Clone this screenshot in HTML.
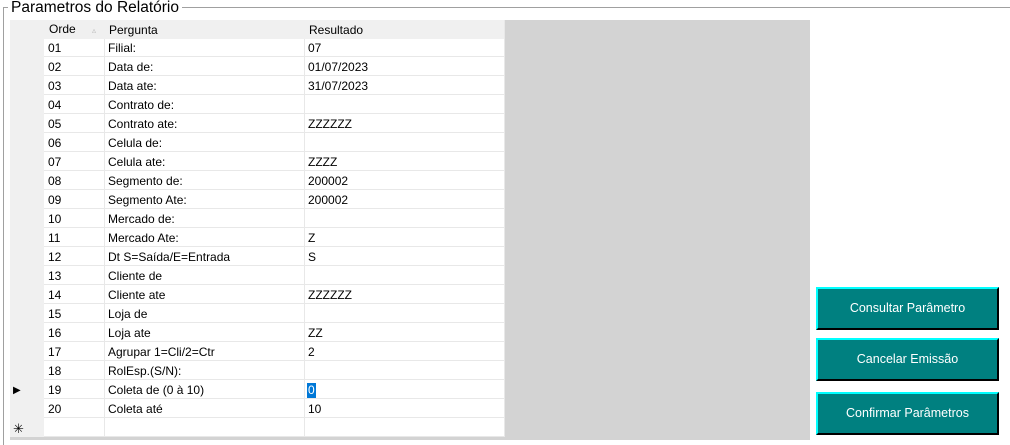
<!DOCTYPE html>
<html><head><style>
body{margin:0;width:1010px;height:445px;background:#fff;position:relative;overflow:hidden;font-family:"Liberation Sans",Arial,sans-serif;font-size:12px;color:#000}
.a{position:absolute}
.t{position:absolute;white-space:nowrap;line-height:19px}
.btn{position:absolute;left:816px;width:183px;height:43px;background:#008080;box-sizing:border-box;border-top:2px solid #00ffff;border-left:2px solid #00ffff;border-right:2px solid #000;border-bottom:2px solid #000;color:#fff;font-size:12.5px;text-align:center;line-height:39px}
</style></head><body>
<div class="a" style="left:3px;top:7px;width:1007px;height:1px;background:#a0a0a0"></div>
<div class="a" style="left:3px;top:7px;width:1px;height:438px;background:#a0a0a0"></div>
<div class="t" style="left:8px;top:-2px;background:#fff;padding:0 3px;font-size:15.5px;line-height:20px">Parametros do Relatório</div>
<div class="a" style="left:10px;top:20px;width:800px;height:420px;background:#d3d3d3"></div>
<div class="a" style="left:10px;top:20px;width:495px;height:19px;background:#f0f0f0"></div>
<div class="a" style="left:10px;top:39px;width:34px;height:398px;background:#f0f0f0"></div>
<div class="a" style="left:44px;top:39px;width:461px;height:398px;background:#fff"></div>
<div class="t" style="left:49px;top:20px">Orde</div>
<div class="t" style="left:92px;top:21px;color:#bbb;font-size:8px">▵</div>
<div class="t" style="left:109px;top:21px">Pergunta</div>
<div class="t" style="left:309px;top:21px">Resultado</div>
<div id="g"></div>
<div class="btn" style="top:287px">Consultar Parâmetro</div>
<div class="btn" style="top:338px">Cancelar Emissão</div>
<div class="btn" style="top:392px">Confirmar Parâmetros</div>
<script>
var d=[["01","Filial:","07"],["02","Data de:","01/07/2023"],["03","Data ate:","31/07/2023"],["04","Contrato de:",""],["05","Contrato ate:","ZZZZZZ"],["06","Celula de:",""],["07","Celula ate:","ZZZZ"],["08","Segmento de:","200002"],["09","Segmento Ate:","200002"],["10","Mercado de:",""],["11","Mercado Ate:","Z"],["12","Dt S=Saída/E=Entrada","S"],["13","Cliente de",""],["14","Cliente ate","ZZZZZZ"],["15","Loja de",""],["16","Loja ate","ZZ"],["17","Agrupar 1=Cli/2=Ctr","2"],["18","RolEsp.(S/N):",""],["19","Coleta de (0 à 10)","0"],["20","Coleta até","10"]];
var h="";
for(var i=0;i<21;i++){var y=38+i*19,ty=y+1;
h+='<div class="a" style="left:44px;top:'+(y+18)+'px;width:461px;height:1px;background:#e8e8e8"></div>';
if(i<20){var r=d[i];h+='<div class="t" style="left:48px;top:'+ty+'px">'+r[0]+'</div><div class="t" style="left:108px;top:'+ty+'px">'+r[1]+'</div>';
if(i==18)h+='<div class="t" style="left:307px;top:'+(ty+2)+'px;line-height:15px;background:#0078d7;color:#fff;padding:0 1px">0</div>';
else h+='<div class="t" style="left:308px;top:'+ty+'px">'+r[2]+'</div>';}}
h+='<div class="a" style="left:104px;top:39px;width:1px;height:398px;background:#e8e8e8"></div><div class="a" style="left:304px;top:39px;width:1px;height:398px;background:#e8e8e8"></div><div class="a" style="left:504px;top:20px;width:1px;height:417px;background:#e8e8e8"></div>';
h+='<div class="t" style="left:13px;top:381px;font-size:10px">▶</div><div class="t" style="left:13px;top:419px;font-size:13px">✳</div>';
document.getElementById("g").innerHTML=h;
</script>
</body></html>
